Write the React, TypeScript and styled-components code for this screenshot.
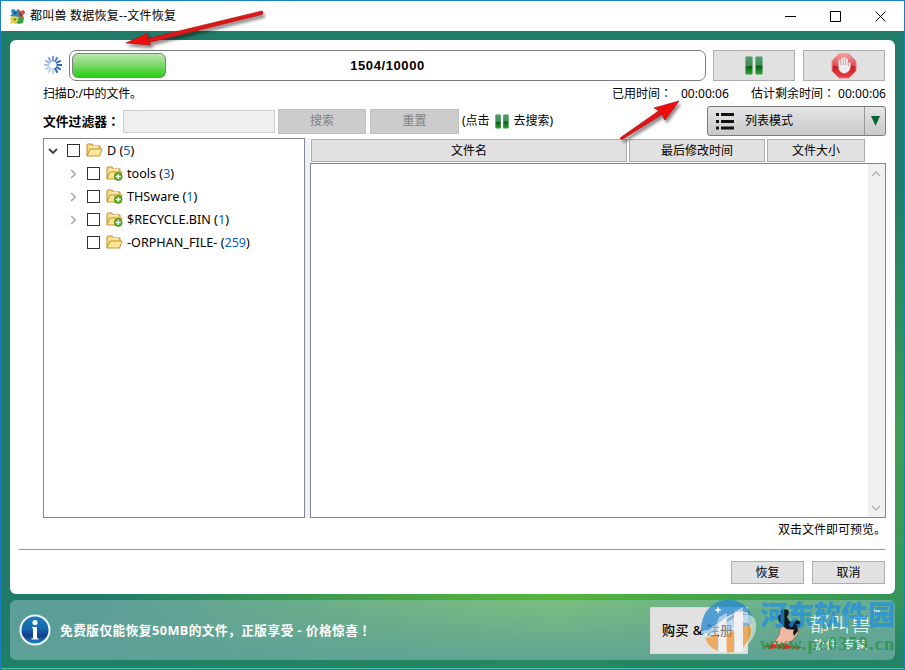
import React from 'react';
import styled, { createGlobalStyle } from 'styled-components';

const GlobalStyle = createGlobalStyle`
  * { box-sizing: border-box; }
  body {
    margin: 0;
    font-family: 'Noto Sans', 'Noto Sans CJK SC', sans-serif;
    font-size: 12px;
    line-height: 16px;
    color: #000;
  }
`;

const Window = styled.div`
  position: relative;
  width: 905px;
  height: 670px;
  overflow: hidden;
  display: flex;
  flex-direction: column;
  border: 1px solid #1b7fc4;
  background: #fff;
`;
const TitleBar = styled.header`
  height: 30px;
  flex: none;
  display: flex;
  align-items: center;
  padding: 0 18px 0 8px;
`;
const Title = styled.h1`
  flex: 1;
  margin: 0 0 0 4px;
  font-size: 12px;
  font-weight: 400;
  letter-spacing: 0.24px;
`;
const Controls = styled.div`
  display: flex;
  gap: 34px;
`;
const Body = styled.main`
  flex: 1;
  display: flex;
  flex-direction: column;
  gap: 6px;
  padding: 9px 9px 8px;
  border-bottom: 1px solid #4fc0a0;
  background:
    linear-gradient(to bottom, transparent 566px, rgba(31, 128, 103, 0.85) 628px),
    linear-gradient(to bottom, #207c69 140px, #3f9d52 400px, #3a9a55 500px, #369659 560px) right top / 12px 566px no-repeat,
    linear-gradient(to right, #207c69 100px, #3f9d4d 335px, #4fb23e 500px, #54b63c 560px, #45a945 680px, #369659 880px) left bottom / 100% 78px no-repeat,
    #207c69;
`;
const Panel = styled.section`
  height: 554px;
  flex: none;
  padding: 10px 9px 0 33px;
  border-radius: 6px;
  background: #fff;
`;
const Row = styled.div<{ $h: number; $gap?: number }>`
  display: flex;
  align-items: center;
  height: ${p => p.$h}px;
  gap: ${p => p.$gap || 0}px;
`;
const ProgressTrack = styled.div`
  display: grid;
  align-items: center;
  width: 637px;
  height: 31px;
  margin: 0 7px 0 6px;
  padding: 2px;
  border: 1px solid #7d7d7d;
  border-radius: 7px;
`;
const ProgressFill = styled.div`
  grid-area: 1 / 1;
  width: 94px;
  height: 25px;
  border: 1px solid #858085;
  border-radius: 6px;
  background: linear-gradient(#bce8b0, #82d970 45%, #27cf14);
`;
const ProgressText = styled.strong`
  grid-area: 1 / 1;
  text-align: center;
  font: bold 13px 'Liberation Sans', sans-serif;
  letter-spacing: 0.6px;
`;
const Button = styled.button<{ $w: number; $h: number; $disabled?: boolean }>`
  display: flex;
  align-items: center;
  justify-content: center;
  width: ${p => p.$w}px;
  height: ${p => p.$h}px;
  padding: 0;
  font: inherit;
  color: ${p => (p.$disabled ? '#838383' : '#000')};
  border: 1px solid ${p => (p.$disabled ? '#bfbfbf' : '#adadad')};
  background: ${p => (p.$disabled ? '#ccc' : '#e1e1e1')};
`;
const Colon = styled.span`
  font-family: 'Noto Sans CJK TC', sans-serif;
`;
const Scanning = styled.span`
  letter-spacing: -0.15px;
`;
const Elapsed = styled.span`
  margin-left: auto;
  margin-right: 22px;
`;
const Clock = styled.span<{ $gap: number }>`
  margin-left: ${p => p.$gap}px;
  letter-spacing: 0.05px;
`;
const FilterLabel = styled.strong`
  width: 80px;
  font-size: 12.8px;
  white-space: nowrap;
`;
const FilterInput = styled.input`
  width: 152px;
  height: 23px;
  margin-right: 3px;
  border: 1px solid #ccc;
  background: #f0f0f0;
`;
const FilterHint = styled.span`
  display: flex;
  align-items: center;
  gap: 5px;
  margin-left: -1px;
`;
const ModeSelect = styled.div`
  display: flex;
  align-items: center;
  width: 179px;
  height: 30px;
  margin-left: auto;
  border: 1px solid #7b7b7b;
  border-radius: 3px;
  background: linear-gradient(#e5e5e5, #c9c9c9);
`;
const ModeName = styled.span`
  flex: 1;
  margin-left: 9px;
`;
const ModeArrow = styled.span`
  display: flex;
  align-items: center;
  justify-content: center;
  width: 21px;
  height: 100%;
  border-left: 1px solid #999;
`;
const Split = styled.div`
  display: grid;
  grid-template-columns: 262px 5px 576px;
  height: 380px;
  margin-top: 2px;
`;
const Tree = styled.ul`
  margin: 0;
  padding: 0 0 0 4px;
  list-style: none;
  border: 1px solid #828790;
`;
const TreeItem = styled.li<{ $depth: number }>`
  display: flex;
  align-items: center;
  height: 23px;
  padding-left: ${p => p.$depth * 20}px;
`;
const Chevron = styled.span`
  display: flex;
  width: 19px;
`;
const CheckBox = styled.span`
  width: 13px;
  height: 13px;
  margin-right: 6px;
  border: 1px solid #333;
`;
const TreeName = styled.span`
  margin-left: 4px;
  font-size: 12.6px;
  white-space: pre;
`;
const Count = styled.span`
  color: #0b5fc4;
`;
const Divider = styled.div`
  background: #efeff4;
`;
const FileArea = styled.div`
  display: flex;
  flex-direction: column;
`;
const Header = styled.div`
  display: flex;
  gap: 2px;
  height: 25px;
  padding: 1px 0 1px 1px;
`;
const HeaderCell = styled.div<{ $w: number }>`
  display: flex;
  align-items: center;
  justify-content: center;
  width: ${p => p.$w}px;
  border: 1px solid #adadad;
  background: #e1e1e1;
`;
const FileList = styled.div`
  flex: 1;
  display: flex;
  justify-content: flex-end;
  border: 1px solid #828790;
`;
const ScrollBar = styled.div`
  display: flex;
  flex-direction: column;
  justify-content: space-between;
  align-items: center;
  width: 17px;
  padding: 5px 2px 4px 0;
  background: #f0f0f0;
`;
const PreviewHint = styled.p`
  margin: 4px 0 11px;
  text-align: right;
`;
const Rule = styled.hr`
  height: 1px;
  margin: 0 1px 11px -24px;
  border: 0;
  background: #999;
`;
const Actions = styled.div`
  display: flex;
  justify-content: flex-end;
  gap: 8px;
  padding-right: 1px;
`;
const Footer = styled.footer`
  display: flex;
  align-items: center;
  height: 60px;
  flex: none;
  padding-left: 9px;
  border-radius: 6px;
  background: rgba(175, 205, 215, 0.43);
`;
const Promo = styled.strong`
  width: 590px;
  flex: none;
  margin-left: 9px;
  color: #fff;
  font-size: 12.7px;
  letter-spacing: 0.45px;
`;
const Buy = styled(Button)`
  justify-content: flex-start;
  flex: none;
  padding-left: 11px;
  font-size: 13px;
  font-weight: 500;
  letter-spacing: 0.45px;
  border-color: #d7d7d7;
`;
const Brand = styled.div`
  display: flex;
  align-items: center;
  margin-left: 15px;
  color: #fff;
`;
const BrandText = styled.div`
  display: flex;
  flex-direction: column;
  margin-left: 4px;
  font-family: 'Noto Sans CJK SC', sans-serif;
`;
const BrandName = styled.span`
  display: flex;
  font-size: 20px;
  line-height: 29px;
  font-weight: 300;
  letter-spacing: 1px;
`;
const Trademark = styled.sup`
  font: 8px/8px 'Liberation Sans', sans-serif;
`;
const BrandTag = styled.span`
  padding-left: 4px;
  font-size: 11.5px;
  line-height: 13px;
  letter-spacing: 1.4px;
`;
const Overlay = styled.svg`
  position: absolute;
  left: -1px;
  top: -1px;
  pointer-events: none;
`;
const Watermark = styled.div`
  position: absolute;
  left: 699px;
  top: 597px;
  display: flex;
  gap: 3px;
  pointer-events: none;
`;
const WatermarkText = styled.div`
  display: flex;
  flex-direction: column;
  white-space: nowrap;
`;
const SiteName = styled.span`
  color: rgba(32, 143, 225, 0.72);
  font: 900 27px/32px 'Noto Sans CJK SC', sans-serif;
`;
const SiteUrl = styled.span`
  color: rgba(38, 148, 67, 0.8);
  font: bold 18px/28px 'Liberation Serif', serif;
  letter-spacing: 1.25px;
`;

const AppIcon = () => (
  <svg width="17" height="17" viewBox="0 0 17 17">
    <path d="M2 2l3-1 2 2 2-2 2 2-1 3 1 3H6L1 8l2-2z" fill="#258bc6" />
    <path d="M9 2l3 1 3-1 1 3-2 2 1 4-4-1-2-2 1-3z" fill="#e14a32" />
    <path d="M1 10l4-2 4 1v3l-2 4-3-1-3 1 1-3z" fill="#e4ce3e" />
    <path d="M9 10l3-2 3 2-1 5-4 1-3-1 2-2z" fill="#3f9b48" />
    <path d="M5 4l2 2M11 5l1 3M5 11l2 1" stroke="#263f50" strokeWidth="1.2" />
  </svg>
);

const SPOKES = [0.6, 0.8, 0.95, 1, 1, 1, 0.3, 0.3, 0.35, 0.4, 0.5, 0.55];

const Spinner = () => (
  <svg width="20" height="20" viewBox="-10 -9 20 20">
    {SPOKES.map((opacity, i) => (
      <path key={i} d="M0-3.6V-9" stroke="#2b62bb" strokeWidth="2" opacity={opacity} transform={`rotate(${i * 30})`} />
    ))}
  </svg>
);

const PauseIcon = ({ w = 18, h = 19 }: { w?: number; h?: number }) => (
  <svg width={w} height={h} viewBox="0 0 18 19" preserveAspectRatio="none">
    <defs>
      <linearGradient id="pause" x2="0" y2="1">
        <stop stopColor="#3d945c" /><stop offset=".5" stopColor="#287b45" />
        <stop offset=".52" stopColor="#075c13" /><stop offset="1" stopColor="#30a333" />
      </linearGradient>
    </defs>
    <rect x=".5" y=".5" width="7" height="18" rx="1" fill="url(#pause)" />
    <rect x="10.5" y=".5" width="7" height="18" rx="1" fill="url(#pause)" />
    <path d="M.5 11L7.5 9v-8h-7zM10.5 9h7v-8h-7z" fill="#7cb890" opacity=".3" />
  </svg>
);

const StopIcon = () => (
  <svg width="26" height="26" viewBox="0 0 26 26">
    <defs>
      <linearGradient id="stop" x2="0" y2="1">
        <stop stopColor="#f1a1a1" /><stop offset=".48" stopColor="#e04b50" />
        <stop offset=".5" stopColor="#c71c23" /><stop offset="1" stopColor="#ea4045" />
      </linearGradient>
    </defs>
    <path d="M8 1h10l7 7v10l-7 7H8l-7-7V8z" fill="url(#stop)" stroke="#e98084" />
    <path d="M7.6 7v8l1 3q4 4 8 1 2.6-1.5 2.8-5V9.5h-1.8V13h-.7V5.5h-1.8V12h-.7V4h-1.8v8h-.7V5h-1.8v7h-.7V7z" fill="#eee" stroke="#d9c5c5" strokeWidth=".4" />
  </svg>
);

const FolderIcon = ({ plus }: { plus?: boolean }) => (
  <svg width="17" height="15" viewBox="0 0 17 15">
    <path d="M1 13V2q0-1 1-1h4l1.5 2H14v3" fill="#f7dd83" stroke="#c58b28" />
    <path d="M1 13L4 6h12l-2.5 7z" fill="#ffe79a" stroke="#c9922f" strokeLinejoin="round" />
    <path d="M4 5l2-1.3h6" stroke="#fff5c9" fill="none" />
    {plus && <><circle cx="12.2" cy="10.5" r="4" fill="#57ab1c" stroke="#3e8b17" strokeWidth=".6" /><path d="M12.2 8v5M9.7 10.5h5" stroke="#fff" strokeWidth="1.3" /></>}
  </svg>
);

const ChevronIcon = ({ dir, color = '#a6a6a6', bold }: { dir: 'up' | 'down' | 'right'; color?: string; bold?: boolean }) => (
  <svg width="10" height="10" viewBox="0 0 10 10" fill="none" stroke={color} strokeWidth={bold ? 1.8 : 1.5}>
    <path d={dir === 'right' ? 'M3.2 1l4 4-4 4' : dir === 'down' ? 'M1 3l4 4 4-4' : 'M1 7l4-4 4 4'} />
  </svg>
);

const InfoIcon = () => (
  <svg width="32" height="32" viewBox="0 0 32 32">
    <defs>
      <linearGradient id="info" x2="0" y2="1">
        <stop stopColor="#1780bd" /><stop offset=".45" stopColor="#1668ad" />
        <stop offset=".7" stopColor="#123d86" /><stop offset="1" stopColor="#1b91d5" />
      </linearGradient>
    </defs>
    <circle cx="16" cy="16" r="14.5" fill="url(#info)" stroke="#f2f6fc" strokeWidth="2" />
    <circle cx="16" cy="8.6" r="2.6" fill="#fff" />
    <path d="M13 13h5v11.3h1.500V25.500h-7v-1.200H14v-10h-1z" fill="#fff" />
  </svg>
);

const BrushIcon = () => (
  <svg width="42" height="44" viewBox="0 0 42 44">
    <path d="M18 17l6 4 12-1-1 6-6 7-5 3-5-1-8 4q-2-1-1-3l6-9z" fill="#efb9a0" stroke="#7c5148" strokeWidth=".6" />
    <path d="M17 3q4-3 8-1l1 3-2 4 3 5 7-2 4 2-1 4-4 4-9-1-7-6-3-6 4-3z" fill="#101820" />
    <path d="M34 17l-4 7 1 4 4-5z" fill="#101820" />
    <path d="M1 38l9-2 5 1 7-1 6 2 11 1-4 2-6-1-7 1-8-1-7 1z" fill="#cf3423" />
  </svg>
);

const SiteLogo = () => (
  <svg width="57" height="60" viewBox="0 0 57 60">
    <path d="M1 31Q2 10 20 3 42-3 53 19 46 12 37 14l-9 4-12 9-9 8-5 2z" fill="#2186cf" fillOpacity=".75" />
    <path d="M5 40q6 0 13-5v18Q9 50 5 40zM26 36l8-4v22q-4 1-8 0zM43 29l9-3q1 16-9 24z" fill="#ef9b3c" fillOpacity=".78" />
    <path d="M6 31l12-7v10l-11 3zM26 22l8-6v14l-8 4zM43 15q7 1 9 6v5l-9 3z" fill="#2186cf" fillOpacity=".5" />
    <path d="M1 33q5 1 16-8l2-6 8-4v9l7-4v-6l9-5v8q11-2 13 8 1 16-14 26 12-15 8-23-2-5-7-3v29h-8V32l-8 4v18h-8V35Q7 43 1 33z" fill="#fff" fillOpacity=".5" />
    <path d="M18 8l1 3 3 1-3 1-1 3-1-3-3-1 3-1z" fill="#fff" />
  </svg>
);

const ARROWS = [
  { shaft: 'M262 11L148 38.5 149 42.5 262 14.5Q264 12 262 11Z', head: 'M126 43L148 33 147 39 151 45Z' },
  { shaft: 'M620 138L660 110 663 114 622 139.5Z', head: 'M679 101L654 108 660 111 665 120Z' },
];

const NODES = [
  { name: 'D', count: 5, depth: 0, open: true },
  { name: 'tools', count: 3, depth: 1, plus: true },
  { name: 'THSware', count: 1, depth: 1, plus: true },
  { name: '$RECYCLE.BIN', count: 1, depth: 1, plus: true },
  { name: '-ORPHAN_FILE-', count: 259, depth: 1 },
];

export default function App() {
  return (
    <Window>
      <GlobalStyle />
      <TitleBar>
        <AppIcon />
        <Title>都叫兽 数据恢复--文件恢复</Title>
        <Controls>
          <svg width="11" height="11"><path d="M0 5.5h11" stroke="#000" /></svg>
          <svg width="11" height="11"><path d="M.5.5h10v10H.5z" fill="none" stroke="#000" /></svg>
          <svg width="11" height="11"><path d="M.5.5l10 10M10.5.5l-10 10" stroke="#000" /></svg>
        </Controls>
      </TitleBar>
      <Body>
        <Panel>
          <Row $h={31}>
            <Spinner />
            <ProgressTrack>
              <ProgressFill />
              <ProgressText>1504/10000</ProgressText>
            </ProgressTrack>
            <Row $h={31} $gap={8}>
              <Button $w={82} $h={31}><PauseIcon /></Button>
              <Button $w={82} $h={31}><StopIcon /></Button>
            </Row>
          </Row>
          <Row $h={25}>
            <Scanning>扫描D:/中的文件。</Scanning>
            <Elapsed>已用时间<Colon>：</Colon><Clock $gap={9}>00:00:06</Clock></Elapsed>
            <span>估计剩余时间<Colon>：</Colon><Clock $gap={3}>00:00:06</Clock></span>
          </Row>
          <Row $h={30}>
            <FilterLabel>文件过滤器<Colon>：</Colon></FilterLabel>
            <FilterInput disabled />
            <Row $h={30} $gap={4}>
              <Button $w={88} $h={25} $disabled>搜索</Button>
              <Button $w={89} $h={25} $disabled>重置</Button>
              <FilterHint>(点击<PauseIcon w={14} h={15} />去搜索)</FilterHint>
            </Row>
            <ModeSelect>
              <svg width="28" height="18" viewBox="0 0 28 18">
                <path d="M8 2.5h3M13 2.5h13M8 9.5h3M13 9.5h13M8 16h3M13 16h13" stroke="#111" strokeWidth="3" />
              </svg>
              <ModeName>列表模式</ModeName>
              <ModeArrow><svg width="9" height="10"><path d="M0 0h9L4.5 10z" fill="#086537" /></svg></ModeArrow>
            </ModeSelect>
          </Row>
          <Split>
            <Tree>
              {NODES.map(n => (
                <TreeItem key={n.name} $depth={n.depth}>
                  <Chevron>
                    {n.open ? <ChevronIcon dir="down" color="#404040" bold /> : n.plus && <ChevronIcon dir="right" />}
                  </Chevron>
                  <CheckBox />
                  <FolderIcon plus={n.plus} />
                  <TreeName>{n.name} (<Count>{n.count}</Count>)</TreeName>
                </TreeItem>
              ))}
            </Tree>
            <Divider />
            <FileArea>
              <Header>
                <HeaderCell $w={316}>文件名</HeaderCell>
                <HeaderCell $w={136}>最后修改时间</HeaderCell>
                <HeaderCell $w={98}>文件大小</HeaderCell>
              </Header>
              <FileList>
                <ScrollBar>
                  <ChevronIcon dir="up" color="#b5b5b5" />
                  <ChevronIcon dir="down" color="#b5b5b5" />
                </ScrollBar>
              </FileList>
            </FileArea>
          </Split>
          <PreviewHint>双击文件即可预览。</PreviewHint>
          <Rule />
          <Actions>
            <Button $w={73} $h={23}>恢复</Button>
            <Button $w={73} $h={23}>取消</Button>
          </Actions>
        </Panel>
        <Footer>
          <InfoIcon />
          <Promo>免费版仅能恢复50MB的文件，正版享受 - 价格惊喜<Colon>！</Colon></Promo>
          <Buy $w={98} $h={47}>购买 &amp; 注册</Buy>
          <Brand>
            <BrushIcon />
            <BrandText>
              <BrandName>都叫兽<Trademark>™</Trademark></BrandName>
              <BrandTag>软件 专家</BrandTag>
            </BrandText>
          </Brand>
        </Footer>
      </Body>
      <Overlay width="905" height="670">
        <defs>
          <filter id="shadow" x="-20%" y="-50%" width="140%" height="220%">
            <feDropShadow dx="2" dy="3" stdDeviation="1.6" floodOpacity=".45" />
          </filter>
        </defs>
        {ARROWS.map(a => (
          <g key={a.head} fill="#e01414" stroke="#a81515" strokeWidth=".7" filter="url(#shadow)">
            <path d={a.shaft} />
            <path d={a.head} fill="#f01010" />
          </g>
        ))}
      </Overlay>
      <Watermark>
        <SiteLogo />
        <WatermarkText>
          <SiteName>河东软件园</SiteName>
          <SiteUrl>www.pc0359.cn</SiteUrl>
        </WatermarkText>
      </Watermark>
    </Window>
  );
}
